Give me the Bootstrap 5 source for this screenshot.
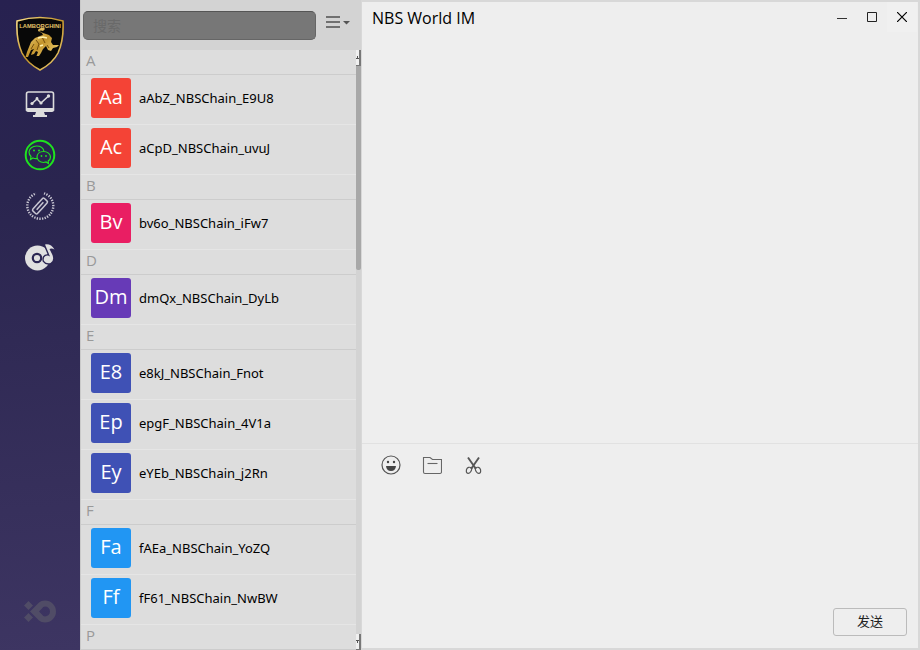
<!DOCTYPE html>
<html lang="zh-CN">
<head>
<meta charset="utf-8">
<meta name="viewport" content="width=device-width, initial-scale=1">
<title>NBS World IM</title>
<link rel="stylesheet" href="https://cdn.jsdelivr.net/npm/bootstrap@5.3.0/dist/css/bootstrap.min.css">
<style>
body{font-family:"Open Sans","Noto Sans CJK SC",sans-serif;font-size:14px;background:#eee;color:#000}
svg{display:block}
.side{width:80px;background:linear-gradient(175deg,#272150,#2a254f 30%,#3d3562)}
.side-link{height:51px}
.side-logo{height:78px;padding-top:16px}
.side-foot{height:76px}
.contacts{width:282px;background:#d3d3d3;border-left:1px solid #c9c9c9;border-right:1px solid #d8d8d8}
.contacts-head{height:50px;padding:11px 11px 10px 2px;gap:10px}
.search-box{height:29px;background:#777;border:1px solid #666;border-top-color:#555;border-radius:5px;padding:0 9px;font-size:14px;color:#fff}
.search-box:focus{background:#777;color:#fff;box-shadow:none;border-color:#555}
.search-box::placeholder{color:#696969}
.menu-btn{width:24px}
.roster{background:#ddd}
.letter{height:25px;line-height:21px;padding-left:5px;font-size:15px;font-weight:400;color:#999;border-bottom:1px solid #ccc}
.person{height:50px;padding:0 0 4px 10px;gap:8px;border-bottom:1px solid #e5e5e5}
.person span:last-child{font-family:"Noto Sans","Noto Sans CJK SC",sans-serif;font-size:13px;line-height:20px}
.tile{width:40px;height:40px;line-height:38px;border-radius:3px;font-size:20px;color:#fff}
.red{background:#f44336}.pink{background:#e91e63}.purple{background:#673ab7}.indigo{background:#3f51b5}.blue{background:#2196f3}
.scroller{width:5px;background:#d3d3d3}
.scroll-end{height:16px;background:#f0f0f0;border-right:2px solid #777;border-bottom:1px solid #777}
.scroll-thumb{height:34%;background:#a8a8a8;border-radius:0 0 2px 2px}
.chat{background:#eee;border:solid #d8d8d8;border-width:2px 2px 2px 0}
.chat-head{height:32px;padding:0 1px 0 10px}
.chat-title{font-size:16px;line-height:32px}
.win-btn{width:30px;height:30px}
.win-close{background:#f0f0f0}
.compose{height:205px;border-top:1px solid #e1e1e1}
.tools{height:42px;padding-left:19px;gap:21px}
.draft{resize:none;background:transparent;outline:0}
.send{width:74px;height:28px;margin:0 11px 12px 0;padding:0;border:1px solid #bbb;border-radius:3px;font-size:13px;color:#222}
</style>
<script src="https://cdn.jsdelivr.net/npm/bootstrap@5.3.0/dist/js/bootstrap.bundle.min.js"></script>
</head>
<body>
<div class="d-flex vh-100 overflow-hidden">
<nav class="side d-flex flex-column flex-shrink-0" aria-label="Main">
 <a href="#" class="side-logo d-flex justify-content-center align-items-start" aria-label="Profile">
  <svg width="50" height="56" viewBox="0 0 50 56">
   <defs><linearGradient id="gold" x2="1" y2="1"><stop stop-color="#fce08a"/><stop offset=".5" stop-color="#c3942c"/><stop offset="1" stop-color="#f5d779"/></linearGradient></defs>
   <path d="M2 5Q25-2 48 5Q49 24 43 37Q38 47 25 54Q12 47 7 37Q1 24 2 5Z" fill="#080808" stroke="url(#gold)" stroke-width="1.6"/>
   <text x="25" y="12" text-anchor="middle" font-family="Liberation Sans, sans-serif" font-weight="700" font-size="5.800" fill="#e2c268">LAMBORGHINI</text>
   <path d="M22.500 13Q28 10 29 13L27 15Q25 14 23 15L27 17L33 19L36 22L35 26L37 29L43 29L41 31L37 32L35 35L32 34L30 30L27 33L25 37L23 40H20.500L22 36L20 35L18 38L15 39L16 36L18 33L15 34L12 41H9.500L11 36L13 31L15 26L19 22L24 20L27 19L26 17L22 15Z" transform="translate(1)" fill="url(#gold)"/>
   <path d="M20 24l3 4-2 6M26 21l3 6M31 29l2 3M15 33l3-5" transform="translate(1)" fill="none" stroke="#76500f" stroke-width="1"/>
   <path d="M22 22l5-1 4 1M24 30l3-1" transform="translate(1)" fill="none" stroke="#fff0ad" stroke-width="1.400"/>
  </svg></a>
 <a href="#" class="side-link d-flex justify-content-center align-items-center" aria-label="Dashboard">
  <svg width="30" height="26" viewBox="0 0 30 26" fill="none" stroke="#dcdcdc"><path d="M1.500 19V3Q1.500 1 3.500 1H26.500Q28.500 1 28.500 3V19Z" stroke-width="1.600"/><path d="M1 17H29V19Q29 21 27 21H3Q1 21 1 19ZM11 21H19L20 24H22V26H8V24H10Z" fill="#dcdcdc" stroke="none"/><path d="M7 12.500L12 8L16 12L23 5.500" stroke-width="1.600"/><g fill="#dcdcdc" stroke="none"><circle cx="7" cy="12.500" r="1.600"/><circle cx="12" cy="7.500" r="1.400"/><circle cx="16" cy="12" r="1.600"/><circle cx="23.500" cy="5" r="1.700"/></g></svg></a>
 <a href="#" class="side-link d-flex justify-content-center align-items-center" aria-label="Chat">
  <svg width="32" height="32" viewBox="0 0 32 32" fill="none" stroke="#1fe31f"><circle cx="16" cy="16" r="14.300" stroke-width="2"/><path d="M13 19.500Q11 19.800 9 19L6.500 20.500L7 17.500Q5 15.500 5 13C5 9.500 8.500 7 12.500 7Q19 7 20 12.500M19.500 12.500C15.500 12.500 13 15 13 18C13 21 16 23.500 19.500 23.500L22 23L24.500 24.500L24.200 22Q26.500 20.500 26.500 18C26.500 15 23.500 12.500 19.500 12.500Z" stroke-width="1.200"/><g fill="#1fe31f" stroke="none"><circle cx="10" cy="11.500" r="1"/><circle cx="15" cy="11.500" r="1"/><circle cx="17.500" cy="17" r=".9"/><circle cx="22" cy="17" r=".9"/></g></svg></a>
 <a href="#" class="side-link d-flex justify-content-center align-items-center" aria-label="Links">
  <svg width="30" height="30" viewBox="0 0 30 30" fill="none" stroke="#c9c7d3"><path d="M19 2.300A13 13 0 1 1 11 2.500" stroke-width="2.400" stroke-dasharray="1.300 1.300"/><g transform="rotate(-48 15 15)" stroke-width="1.500"><path d="M16 11.800H8Q6.500 11.800 6.500 13.300V16.700Q6.500 18.200 8 18.200H15M15 11.800H22Q23.500 11.800 23.500 13.300V16.700Q23.500 18.200 22 18.200H14M10 15H20"/></g></svg></a>
 <a href="#" class="side-link d-flex justify-content-center align-items-center" aria-label="Music">
  <svg width="32" height="28" viewBox="0 0 32 28"><circle cx="13.500" cy="15" r="12.500" fill="#e0e0e0"/><circle cx="13" cy="15" r="4.200" fill="#e0e0e0" stroke="#2c2653" stroke-width="2.200"/><path d="M21 1.500Q27 .5 30.500 6.500Q27.500 5 25.500 6L28.500 12Q30.500 18 26.500 20Q22 21 20 18Q19 14.500 21.500 13Q23.500 12 26 13.500Z" fill="#e0e0e0" stroke="#2c2653" stroke-width="2.800" paint-order="stroke"/></svg></a>
 <a href="#" class="side-foot d-flex justify-content-center align-items-center mt-auto" aria-label="About">
  <svg width="32" height="24" viewBox="0 0 32 24" fill="#504c66"><path d="M4.500 1L9 5.500L4.500 10L0 5.500ZM4.500 13L9 17.500L4.500 22L0 17.500Z"/><path fill-rule="evenodd" d="M6 11.500L15 2.500Q17 .5 21 .5A11 11 0 0 1 21 22.500Q17 22.500 15 20.500ZM15 11.500L18 14.500Q19 16.500 21 16.500A5 5 0 0 0 21 6.500Q19 6.500 18 8.500Z"/></svg></a>
</nav>
<aside class="contacts d-flex flex-column flex-shrink-0">
 <div class="contacts-head d-flex">
  <input class="form-control search-box flex-fill" type="search" placeholder="搜索" aria-label="搜索">
  <button class="menu-btn btn border-0 p-0 flex-shrink-0 d-flex align-items-start pt-1" aria-label="Menu"><svg width="24" height="16" viewBox="0 0 24 16"><path d="M0 2H14M0 7H14M0 12H14" stroke="#707070" stroke-width="2"/><path d="M17 6H24L20.500 9.500Z" fill="#555"/></svg></button>
 </div>
 <div class="d-flex flex-fill overflow-hidden">
  <div class="roster flex-fill overflow-hidden">
   <h2 class="letter m-0">A</h2>
   <div class="person d-flex align-items-center"><span class="tile red text-center">Aa</span><span>aAbZ_NBSChain_E9U8</span></div>
   <div class="person d-flex align-items-center"><span class="tile red text-center">Ac</span><span>aCpD_NBSChain_uvuJ</span></div>
   <h2 class="letter m-0">B</h2>
   <div class="person d-flex align-items-center"><span class="tile pink text-center">Bv</span><span>bv6o_NBSChain_iFw7</span></div>
   <h2 class="letter m-0">D</h2>
   <div class="person d-flex align-items-center"><span class="tile purple text-center">Dm</span><span>dmQx_NBSChain_DyLb</span></div>
   <h2 class="letter m-0">E</h2>
   <div class="person d-flex align-items-center"><span class="tile indigo text-center">E8</span><span>e8kJ_NBSChain_Fnot</span></div>
   <div class="person d-flex align-items-center"><span class="tile indigo text-center">Ep</span><span>epgF_NBSChain_4V1a</span></div>
   <div class="person d-flex align-items-center"><span class="tile indigo text-center">Ey</span><span>eYEb_NBSChain_j2Rn</span></div>
   <h2 class="letter m-0">F</h2>
   <div class="person d-flex align-items-center"><span class="tile blue text-center">Fa</span><span>fAEa_NBSChain_YoZQ</span></div>
   <div class="person d-flex align-items-center"><span class="tile blue text-center">Ff</span><span>fF61_NBSChain_NwBW</span></div>
   <h2 class="letter m-0">P</h2>
  </div>
  <div class="scroller d-flex flex-column flex-shrink-0" aria-hidden="true">
   <div class="scroll-end d-flex align-items-center flex-shrink-0"><svg width="3" height="4" viewBox="0 0 3 4"><path d="M0 3H3V2H2V0H1V2H0Z" fill="#555"/></svg></div>
   <div class="scroll-thumb"></div>
   <div class="scroll-end d-flex align-items-center flex-shrink-0 mt-auto"><svg width="3" height="4" viewBox="0 0 3 4"><path d="M0 0H3V1H2V3H1V1H0Z" fill="#555"/></svg></div>
  </div>
 </div>
</aside>
<main class="chat d-flex flex-column flex-fill">
 <header class="chat-head d-flex justify-content-between">
  <h1 class="chat-title fw-normal m-0">NBS World IM</h1>
  <div class="d-flex">
   <button class="win-btn btn border-0 rounded-0 p-0 d-flex align-items-center justify-content-center" aria-label="Minimize"><svg width="10" height="10" viewBox="0 0 10 10"><path d="M0 6.500H10" stroke="#333"/></svg></button>
   <button class="win-btn btn border-0 rounded-0 p-0 d-flex align-items-center justify-content-center" aria-label="Maximize"><svg width="10" height="10" viewBox="0 0 10 10"><path d="M.5.5H9.500V9.500H.5Z" fill="none" stroke="#222"/></svg></button>
   <button class="win-btn win-close btn border-0 rounded-0 p-0 d-flex align-items-center justify-content-center" aria-label="Close"><svg width="10" height="10" viewBox="0 0 10 10"><path d="M0 0L10 10M10 0L0 10" stroke="#000" stroke-width="1.200"/></svg></button>
  </div>
 </header>
 <section class="flex-fill" aria-label="Messages"></section>
 <section class="compose d-flex flex-column">
  <div class="tools d-flex align-items-center flex-shrink-0">
   <button class="btn border-0 p-0" aria-label="Emoji"><svg width="20" height="20" viewBox="0 0 20 20"><circle cx="10" cy="10" r="9" fill="none" stroke="#555" stroke-width="1.200"/><path d="M5 11H15Q14.500 16 10 16Q5.500 16 5 11Z" fill="#444"/><circle cx="7" cy="7" r="1.200" fill="#444"/><circle cx="13" cy="7" r="1.200" fill="#444"/></svg></button>
   <button class="btn border-0 p-0" aria-label="File"><svg width="20" height="20" viewBox="0 0 20 20" fill="none" stroke="#666" stroke-width="1.100"><path d="M1.500 2.500H8L10.500 4.500H19.500V17Q19.500 18.500 18 18.500H3Q1.500 18.500 1.500 17Z"/><path d="M5.500 8.500H15.500"/></svg></button>
   <button class="btn border-0 p-0" aria-label="Screenshot"><svg width="20" height="20" viewBox="0 0 20 20" fill="none" stroke="#555"><path d="M5 2.500L13 14M16 2.500L8 14" stroke-width="1.900"/><path d="M9 13Q5 11 3.500 14.500Q2.800 18 5 18.300Q8 18.500 9 13ZM12 13Q16 11 17.500 14.500Q18.200 18 16 18.300Q13 18.500 12 13Z" stroke-width="1.200"/></svg></button>
  </div>
  <textarea class="draft flex-fill border-0 w-100 px-3" aria-label="Message"></textarea>
  <button class="send btn align-self-end flex-shrink-0">发送</button>
 </section>
</main>
</div>
</body>
</html>
